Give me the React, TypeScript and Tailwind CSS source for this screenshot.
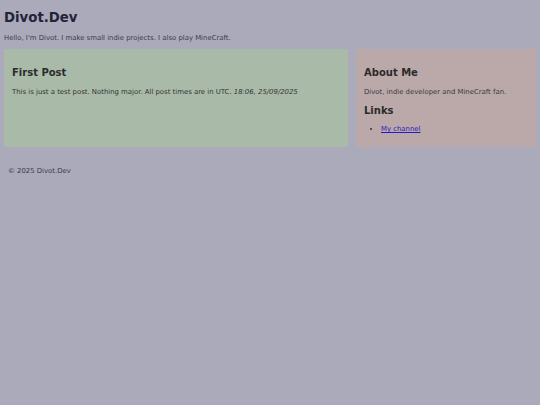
export default function App() {
  return (
    <div
      className="min-h-screen bg-[#abaabb] px-[4px] pt-[10px] text-[#333]"
      style={{ fontFamily: '"DejaVu Sans", Verdana, sans-serif' }}
    >
      <h1 className="text-[13.3px] font-bold leading-[16px] text-[#23233a]">Divot.Dev</h1>
      <p className="mt-[8px] text-[6.9px] leading-[8px] text-[#3a3a48]">
        Hello, I'm Divot. I make small indie projects. I also play MineCraft.
      </p>

      <main className="mt-[7px] flex gap-[8px]">
        <section className="h-[98px] w-[344px] bg-[#a9bba8] px-[8px] pt-[18px]">
          <h2 className="text-[10px] font-bold leading-[12px] text-[#2b2b2b]">First Post</h2>
          <p className="mt-[9px] text-[6.9px] leading-[8px] text-[#333]">
            This is just a test post. Nothing major. All post times are in UTC.{" "}
            <em>18:06, 25/09/2025</em>
          </p>
        </section>

        <aside className="h-[98px] flex-1 bg-[#bba9aa] px-[8px] pt-[18px]">
          <h2 className="text-[10px] font-bold leading-[12px] text-[#2b2b2b]">About Me</h2>
          <p className="mt-[9px] text-[6.9px] leading-[8px] text-[#3a3a3a]">
            Divot, indie developer and MineCraft fan.
          </p>
          <h2 className="mt-[9px] text-[10px] font-bold leading-[12px] text-[#2b2b2b]">Links</h2>
          <ul className="mt-[8px] list-disc pl-[17px] text-[6.9px] leading-[8px]">
            <li>
              <a href="#" className="text-[#2a17c4] underline">
                My channel
              </a>
            </li>
          </ul>
        </aside>
      </main>

      <footer className="mt-[20px] pl-[4px] text-[6.9px] leading-[8px] text-[#3a3a48]">
        © 2025 Divot.Dev
      </footer>
    </div>
  );
}
